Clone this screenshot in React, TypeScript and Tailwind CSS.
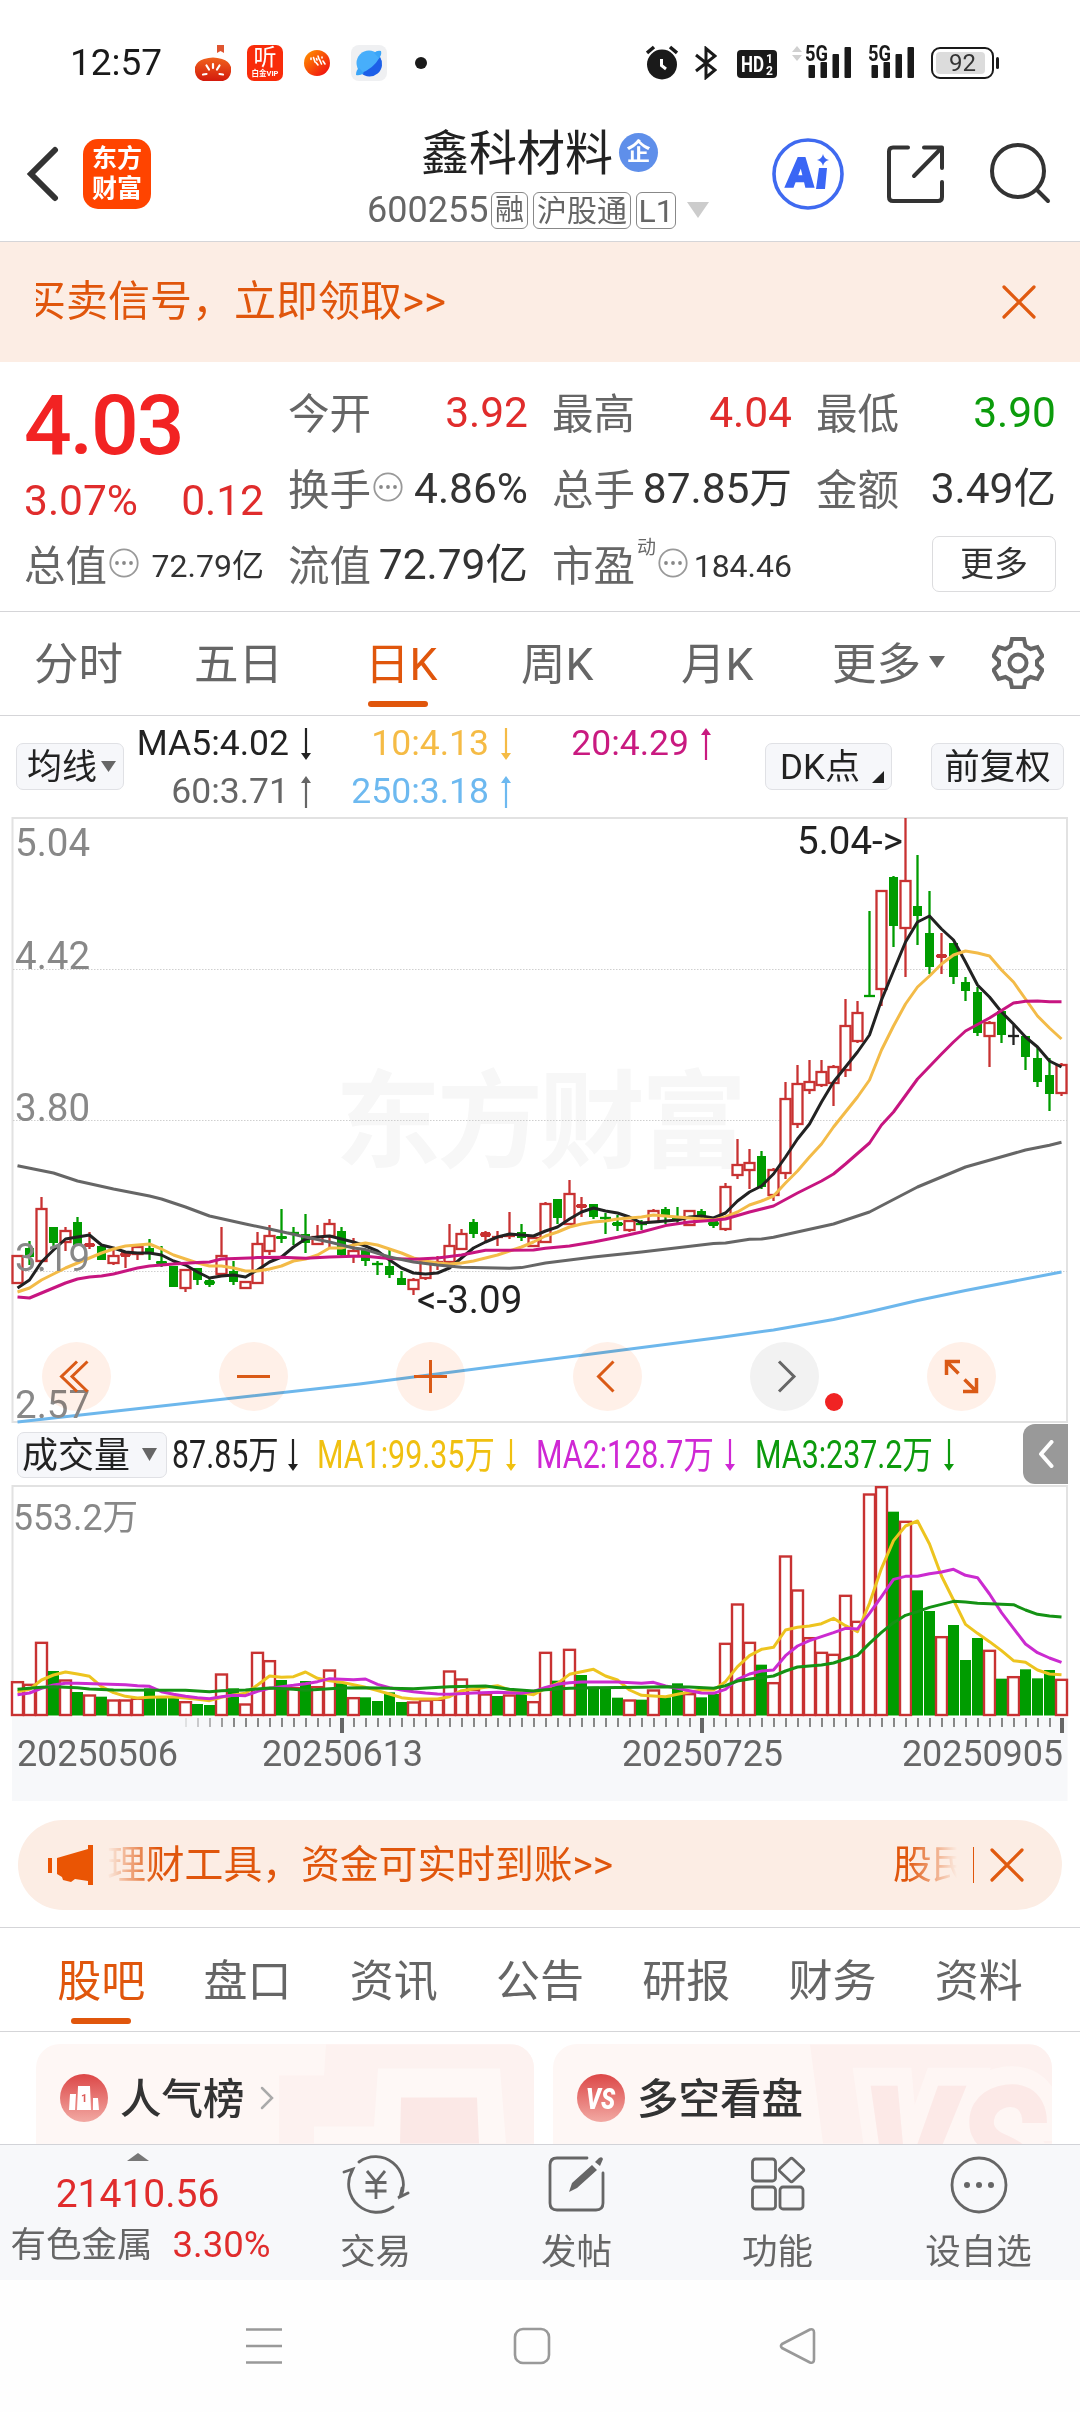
import React from "react";

type Candle = [kind: "r" | "f" | "g" | "k", high: number, top: number, bottom: number, low: number];

// r: hollow rising, f: filled rising, g: falling, k: unchanged
const candles: Candle[] = [
  ["r", 1256, 1256, 1283, 1284], ["g", 1241, 1248, 1257, 1265], ["r", 1197, 1209, 1261, 1262], ["g", 1227, 1227, 1243, 1247],
  ["r", 1227, 1231, 1242, 1251], ["g", 1217, 1222, 1245, 1245], ["f", 1232, 1243, 1247, 1249], ["g", 1246, 1246, 1260, 1260],
  ["r", 1250, 1256, 1263, 1265], ["f", 1252, 1252, 1257, 1268], ["r", 1246, 1247, 1254, 1260], ["g", 1239, 1248, 1254, 1260],
  ["g", 1246, 1261, 1264, 1267], ["g", 1266, 1266, 1287, 1287], ["r", 1270, 1270, 1288, 1292], ["g", 1268, 1268, 1280, 1285],
  ["g", 1277, 1280, 1285, 1287], ["r", 1227, 1256, 1274, 1275], ["g", 1261, 1271, 1282, 1285], ["r", 1281, 1282, 1288, 1288],
  ["r", 1232, 1244, 1283, 1283], ["r", 1225, 1236, 1251, 1255], ["g", 1209, 1236, 1239, 1243], ["g", 1227, 1232, 1234, 1245],
  ["g", 1214, 1234, 1243, 1253], ["r", 1225, 1237, 1244, 1245], ["r", 1219, 1224, 1236, 1247], ["g", 1227, 1231, 1255, 1256],
  ["r", 1238, 1251, 1256, 1263], ["g", 1250, 1250, 1261, 1266], ["g", 1261, 1263, 1265, 1275], ["g", 1250, 1266, 1275, 1278],
  ["g", 1271, 1278, 1285, 1285], ["r", 1278, 1280, 1289, 1295], ["r", 1262, 1262, 1278, 1280], ["f", 1256, 1261, 1263, 1270],
  ["r", 1224, 1246, 1262, 1262], ["r", 1229, 1234, 1249, 1249], ["g", 1219, 1222, 1234, 1238], ["f", 1231, 1232, 1237, 1242],
  ["f", 1231, 1236, 1238, 1246], ["f", 1212, 1235, 1237, 1239], ["g", 1224, 1232, 1238, 1241], ["r", 1238, 1238, 1246, 1246],
  ["r", 1202, 1204, 1242, 1243], ["g", 1199, 1199, 1218, 1224], ["r", 1180, 1194, 1224, 1224], ["f", 1197, 1204, 1208, 1217],
  ["g", 1204, 1204, 1217, 1219], ["g", 1213, 1217, 1219, 1234], ["g", 1215, 1222, 1226, 1231], ["r", 1220, 1221, 1230, 1232],
  ["g", 1220, 1223, 1225, 1230], ["r", 1209, 1211, 1222, 1223], ["g", 1207, 1209, 1215, 1224], ["g", 1207, 1217, 1220, 1223],
  ["r", 1211, 1211, 1225, 1226], ["g", 1209, 1211, 1217, 1218], ["g", 1220, 1221, 1226, 1228], ["r", 1183, 1187, 1229, 1231],
  ["r", 1139, 1165, 1175, 1179], ["r", 1149, 1163, 1170, 1189], ["g", 1151, 1156, 1187, 1189], ["r", 1168, 1170, 1195, 1201],
  ["r", 1082, 1099, 1173, 1179], ["r", 1065, 1084, 1124, 1128], ["r", 1060, 1082, 1090, 1094], ["r", 1060, 1072, 1085, 1087],
  ["r", 1065, 1067, 1083, 1106], ["r", 999, 1026, 1070, 1077], ["r", 1001, 1013, 1041, 1043], ["g", 911, 995, 997, 997],
  ["r", 890, 891, 989, 1006], ["g", 876, 877, 926, 947], ["r", 818, 881, 928, 977], ["g", 855, 906, 916, 945],
  ["g", 891, 933, 967, 974], ["f", 933, 954, 958, 974], ["g", 943, 943, 977, 984], ["g", 977, 982, 991, 1001],
  ["g", 987, 992, 1033, 1036], ["r", 1021, 1023, 1036, 1067], ["g", 1011, 1011, 1035, 1043], ["k", 1025, 1035, 1037, 1045],
  ["g", 1036, 1036, 1057, 1070], ["g", 1048, 1058, 1082, 1087], ["g", 1058, 1075, 1094, 1111], ["r", 1063, 1065, 1093, 1096],
];

const seq = (ys: number[]): [number, number][] => ys.map((y, i) => [i, y]);

const ma5 = seq([
  1288, 1280, 1262, 1250, 1239, 1237, 1235, 1245, 1248, 1252, 1253, 1253, 1255, 1261, 1265, 1272, 1278, 1276, 1275, 1277, 1270, 1262,
  1257, 1247, 1239, 1237, 1236, 1239, 1242, 1246, 1251, 1260, 1268, 1273, 1274, 1273, 1268, 1258, 1248, 1242, 1237, 1234, 1235, 1236,
  1231, 1227, 1219, 1212, 1208, 1211, 1213, 1217, 1223, 1222, 1221, 1220, 1217, 1216, 1218, 1213, 1201, 1192, 1186, 1174, 1157, 1139,
  1124, 1102, 1082, 1067, 1052, 1035, 1000, 971, 942, 922, 916, 929, 940, 962, 985, 997, 1012, 1024, 1037, 1047, 1061, 1067,
]);
const ma10 = seq([
  1292, 1288, 1280, 1274, 1268, 1263, 1258, 1253, 1249, 1246, 1245, 1244, 1249, 1255, 1259, 1263, 1266, 1266, 1268, 1271, 1271, 1269,
  1266, 1261, 1259, 1255, 1248, 1248, 1245, 1243, 1245, 1249, 1253, 1258, 1261, 1263, 1264, 1263, 1261, 1258, 1255, 1251, 1247, 1242,
  1236, 1232, 1227, 1224, 1222, 1221, 1219, 1218, 1217, 1215, 1216, 1217, 1218, 1219, 1220, 1217, 1212, 1205, 1201, 1196, 1183, 1171,
  1157, 1144, 1127, 1112, 1097, 1080, 1050, 1026, 1004, 987, 976, 964, 955, 951, 953, 956, 970, 982, 999, 1016, 1028, 1039,
]);
const ma20: [number, number][] = [
  [0, 1297], [1, 1298], [2, 1293], [3, 1288], [4, 1283], [5, 1279], [6, 1277], [7, 1276], [8, 1274], [9, 1271], [10, 1268], [11, 1266],
  [13, 1264], [15, 1262.5], [16, 1262], [17, 1259], [20, 1257.6], [22, 1257.3], [24, 1258.3], [26, 1257], [28, 1256.3], [29, 1256.3],
  [31, 1258.6], [33, 1259.3], [35, 1258], [37, 1255], [39, 1250.3], [43, 1250], [44, 1248.3], [46, 1246], [48, 1242], [50, 1237.3],
  [52, 1232], [54, 1225.6], [56, 1222], [58, 1220.3], [59, 1219], [61, 1212], [63, 1206], [65, 1193], [67, 1181], [68, 1174], [69, 1164],
  [71, 1143], [72, 1125], [73, 1112], [75, 1079], [77, 1054], [78, 1042], [79, 1031], [81, 1018], [83, 1003], [84, 1001.3], [85, 1001],
  [86, 1001.7], [87, 1001.7],
];
const ma60: [number, number][] = [
  [0, 1165.7], [3, 1173], [5, 1181], [8, 1189], [11, 1196], [12, 1199], [14, 1207], [16, 1216], [19, 1224], [21, 1229], [24, 1237],
  [26, 1242], [28, 1248], [29, 1249.6], [31, 1257], [33, 1262], [35, 1265], [37, 1267.3], [41, 1268.3], [42, 1267.6], [44, 1263],
  [48, 1257], [52, 1252], [58, 1243.6], [59, 1243], [61, 1239.3], [62, 1239], [63, 1237.3], [68, 1224], [71, 1212], [75, 1187],
  [79, 1167], [84, 1150], [86, 1145.3], [87, 1142.3],
];
const ma250: [number, number][] = [
  [0, 1422], [28.5, 1384], [58.5, 1337.5], [63, 1330], [68, 1319.5], [71, 1311.7], [75, 1300.5], [79, 1290.5], [87, 1272],
];

// Heights are kept in thirds of a pixel below y = 1470
const volumes =
  "r635 r643 r517 g603 r630 g666 r675 g680 r690 r690 r685 g655 g683 g683 r695 g702 g705 r612 g655 r702 r547 r572 g630 r653 g633 r650 r600 g640 r683 g682 g693 g667 g696 r696 r690 r688 r603 r627 r658 r672 g678 r675 g672 r695 r547 g632 r538 g615 g650 g657 g683 r690 g689 r660 g682 g640 r671 g682 g672 r520 r402 r517 g584 r638 r258 r360 r503 r547 r553 r376 r454 r72 r50 g125 r154 g361 g423 r500 g465 g570 g504 r541 g626 r620 g598 g625 g600 r628"
    .split(" ")
    .map((v) => ({ up: v[0] === "r", y: 1470 + Number(v.slice(1)) / 3 }));

const third = (pts: [number, number][]): [number, number][] => pts.map(([i, y]) => [i, 1470 + y / 3]);

const vma1 = third(
  seq([
    665, 658, 630, 615, 606, 612, 619, 650, 668, 679, 684, 682, 681, 681, 684, 688, 692, 682, 675, 670, 645, 618, 622, 620, 606, 625, 632,
    637, 644, 652, 662, 672, 683, 687, 687, 687, 680, 662, 657, 652, 647, 660, 668, 674, 655, 640, 613, 605, 598, 618, 630, 660, 676, 678,
    680, 673, 666, 660, 660, 635, 590, 557, 538, 532, 480, 472, 468, 461, 445, 467, 485, 400, 295, 212, 168, 153, 222, 318, 390, 463, 490,
    515, 542, 572, 577, 600, 612, 614,
  ]),
);
const vma2 = third([
  [0, 674], [1, 669], [2, 655], [3, 645], [4, 640], [5, 640], [7, 642], [9, 644], [10, 647], [11, 649], [12, 665], [13, 673], [14, 679],
  [15, 683], [16, 686], [17, 680], [18, 676], [19, 677], [20, 664], [21, 655], [22, 650], [23, 646], [24, 641], [25, 635], [26, 626],
  [28, 629], [29, 627], [30, 643], [31, 653], [32, 660], [33, 665], [34, 669], [35, 672], [36, 673], [38, 669], [40, 667], [42, 670],
  [43, 664], [44, 652], [45, 643], [46, 638], [47, 636], [50, 636], [52, 640], [53, 637], [54, 648], [55, 655], [56, 662], [57, 669],
  [58, 670], [59, 658], [60, 628], [61, 612], [62, 603], [63, 600], [64, 557], [65, 528], [66, 512], [67, 500], [68, 488], [69, 475],
  [70, 477], [71, 430], [72, 380], [73, 328], [74, 319], [75, 319], [76, 311], [77, 306], [78, 298], [79, 316], [80, 323], [81, 372],
  [82, 428], [83, 475], [84, 522], [85, 548], [86, 564], [87, 577],
]);
const vma3 = third([
  [0, 658], [2, 652], [3, 650], [5, 653], [6, 657], [8, 660], [14, 661], [16, 665], [17, 662], [19, 660], [21, 654], [23, 658], [24, 661],
  [26, 656], [27, 654], [29, 653], [33, 656], [36, 650], [39, 648], [41, 658], [43, 663], [44, 659], [46, 655], [48, 653], [52, 652],
  [54, 650], [56, 651], [58, 655], [59, 647], [60, 633], [61, 627], [63, 618], [64, 603], [65, 591], [66, 588], [67, 585], [68, 579],
  [69, 567], [70, 556], [71, 520], [72, 487], [73, 458], [74, 436], [75, 425], [76, 412], [77, 403], [78, 394], [79, 396], [80, 400],
  [83, 404], [84, 420], [85, 433], [86, 438], [87, 441],
]);

const cx = (i: number) => 17.5 + 12 * i;
const line = (pts: [number, number][]) => pts.map(([i, y]) => `${cx(i)},${y}`).join(" ");

const RED = "#c83232";
const GREEN = "#009c00";

function Line({ pts, color }: { pts: [number, number][]; color: string }) {
  return <polyline points={line(pts)} fill="none" stroke={color} strokeWidth={3} strokeLinejoin="round" />;
}

function PriceChart() {
  return (
    <svg className="block h-[607px] w-[1080px]" viewBox="0 817 1080 607">
      <g stroke="#e2e2e2" strokeWidth={2} fill="none">
        <rect x={12.5} y={818} width={1054.5} height={604} />
      </g>
      <text x={335} y={1159} fontSize={106} fontWeight={700} fill="#f7f7f7" textLength={412}>
        东方财富
      </text>
      {[969.5, 1120.5, 1271.5].map((y) => (
        <line key={y} x1={13} x2={1067} y1={y} y2={y} stroke="#cfcfcf" strokeDasharray="1.5 1.5" />
      ))}
      {candles.map(([k, h, t, b, l], i) => {
        const x = cx(i);
        const c = k === "g" ? GREEN : k === "k" ? "#222" : RED;
        return (
          <g key={i} stroke={c} strokeWidth={2.3}>
            {h < t && <line x1={x} x2={x} y1={h} y2={t} />}
            {l > b && <line x1={x} x2={x} y1={b} y2={l} />}
            {k === "r" ? (
              <rect x={x - 5} y={t} width={10} height={Math.max(b - t, 2)} fill="#fff" />
            ) : (
              <rect x={x - 4.5} y={t} width={9} height={Math.max(b - t, 1)} fill={c} stroke="none" />
            )}
            {k !== "r" && b - t <= 5 && <line x1={x - 5.5} x2={x + 5.5} y1={(t + b) / 2} y2={(t + b) / 2} />}
          </g>
        );
      })}
      <Line pts={ma5} color="#222222" />
      <Line pts={ma10} color="#f3bb48" />
      <Line pts={ma20} color="#c71580" />
      <Line pts={ma60} color="#666666" />
      <Line pts={ma250} color="#6db7ec" />
      <g fontSize={38.5} fill="#888">
        <text x={15} y={856}>5.04</text>
        <text x={15} y={969}>4.42</text>
        <text x={15} y={1121}>3.80</text>
        <text x={15} y={1271}>3.19</text>
        <text x={15} y={1418}>2.57</text>
      </g>
      <g fontSize={38.5} fill="#222">
        <text x={797} y={854}>5.04-&gt;</text>
        <text x={417} y={1313}>&lt;-3.09</text>
      </g>
      <g className="mix-blend-multiply">
        {[76.5, 253.5, 430.5, 607.5, 961.5].map((x) => (
          <circle key={x} cx={x} cy={1376.5} r={34.5} fill="#fff0e8" />
        ))}
        <circle cx={784.5} cy={1376.5} r={34.5} fill="#f2f2f2" />
      </g>
      <g fill="none" stroke="#da5a16" strokeWidth={3}>
        <path d="M77 1361.5L61.5 1376.5L77 1391.5M87.5 1361.5L72 1376.5L87.5 1391.5" />
        <path d="M237 1376.5H270" />
        <path d="M414 1376.5H447M430.5 1360V1393" />
        <path d="M613.5 1361.5L598.5 1376.5L613.5 1391.5" />
        <path d="M960 1361.5H946.5V1375M947 1362L958.5 1373.5M976.5 1378V1391.5H963M976 1391L964.5 1379.5" strokeWidth={3.5} />
        <path d="M779 1361.5L794 1376.5L779 1391.5" stroke="#666" />
      </g>
      <circle cx={834} cy={1402} r={9} fill="#f02323" />
    </svg>
  );
}

function VolumeChart() {
  return (
    <svg className="block h-[316px] w-[1080px]" viewBox="0 1485 1080 316">
      <rect x={12} y={1717} width={1055.5} height={84} fill="#f7f8fa" />
      <path d="M12.5 1716V1486H1067V1716" fill="none" stroke="#e2e2e2" strokeWidth={2} />
      {volumes.map(({ up, y }, i) =>
        up ? (
          <rect key={i} x={cx(i) - 5.5} y={y + 0.5} width={11} height={1714.5 - y} fill="#fff" stroke={RED} strokeWidth={2.4} />
        ) : (
          <rect key={i} x={cx(i) - 5.5} y={y} width={11} height={1715.5 - y} fill={GREEN} />
        ),
      )}
      <Line pts={vma1} color="#edc41f" />
      <Line pts={vma2} color="#cb2bd0" />
      <Line pts={vma3} color="#149214" />
      {Array.from({ length: 74 }, (_, k) => k + 14).map((i) => {
        const major = i === 27 || i === 57 || i === 87;
        return (
          <line
            key={i}
            x1={cx(i) + 0.5}
            x2={cx(i) + 0.5}
            y1={1718}
            y2={major ? 1733 : 1727}
            stroke={major ? "#666" : "#888"}
            strokeWidth={major ? 4 : 2}
            opacity={i === 14 ? 0.2 : i === 15 ? 0.4 : i === 16 ? 0.6 : i === 17 ? 0.8 : 1}
          />
        );
      })}
      <text x={13} y={1530} fontSize={36.5} fill="#888" textLength={125} lengthAdjust="spacingAndGlyphs">
        553.2万
      </text>
      <g fontSize={36} fill="#666">
        <text x={17} y={1766} textLength={161}>20250506</text>
        <text x={262} y={1766} textLength={161}>20250613</text>
        <text x={622} y={1766} textLength={161}>20250725</text>
        <text x={902} y={1766} textLength={161}>20250905</text>
      </g>
    </svg>
  );
}

function Arrow({ up = false, className = "" }: { up?: boolean; className?: string }) {
  return (
    <svg viewBox="0 0 12 32" className={"h-8 w-3 shrink-0 " + className} fill="currentColor">
      {up ? <path d="M6 0L11 7H7.1V32H4.9V7H1Z" /> : <path d="M6 32L1 25H4.9V0H7.1V25H11Z" />}
    </svg>
  );
}

function Down({ className = "" }: { className?: string }) {
  return (
    <svg viewBox="0 0 16 12" preserveAspectRatio="none" className={"h-3 w-4 shrink-0 " + className} fill="currentColor">
      <path d="M0 0H16L8 12Z" />
    </svg>
  );
}

function Cross({ className = "" }: { className?: string }) {
  return (
    <svg viewBox="0 0 34 34" className={"h-[34px] w-[34px] shrink-0 " + className} fill="none" stroke="#e05a10" strokeWidth={3.2} strokeLinecap="round">
      <path d="M2 2L32 32M32 2L2 32" />
    </svg>
  );
}

function Info({ className = "" }: { className?: string }) {
  return (
    <svg viewBox="0 0 30 30" className={"h-[30px] w-[30px] shrink-0 " + className}>
      <circle cx={15} cy={15} r={13.7} fill="none" stroke="#999" strokeWidth={1.8} />
      <g fill="#888">
        <circle cx={8} cy={15} r={1.9} />
        <circle cx={15} cy={15} r={1.9} />
        <circle cx={22} cy={15} r={1.9} />
      </g>
    </svg>
  );
}

function Signal({ arrows = false }: { arrows?: boolean }) {
  return (
    <svg viewBox="0 0 62 36" className="h-9 w-[62px] shrink-0 overflow-visible" fill="#1a1a1a">
      {arrows && <path d="M0 7L5 1L10 7ZM0 10H10L5 16Z" fill="#d0d0d0" />}
      <text x={13} y={15.5} fontSize={21.5} fontWeight={700} textLength={23} lengthAdjust="spacingAndGlyphs">
        5G
      </text>
      <rect x={16.5} y={20} width={6.5} height={13} rx={1} />
      <rect x={28.5} y={17} width={6.5} height={16} rx={1} />
      <rect x={40.5} y={9} width={6.5} height={24} rx={1} />
      <rect x={52.5} y={2} width={6.5} height={31} rx={1} />
    </svg>
  );
}

function StatusBar() {
  return (
    <div className="flex h-[124px] items-center pt-px">
      <span className="ml-[70px] w-[125px] text-[37px] leading-none text-[#1a1a1a]">12:57</span>
      <svg viewBox="0 0 36 36" className="h-9 w-9">
        <defs>
          <linearGradient id="fruit" x1="0" y1="0" x2="0" y2="1">
            <stop offset="0" stopColor="#f0621d" />
            <stop offset="1" stopColor="#d31a0c" />
          </linearGradient>
          <linearGradient id="ball" x1="0" y1="0" x2="1" y2="1">
            <stop offset="0.1" stopColor="#ff8a00" />
            <stop offset="0.9" stopColor="#f01010" />
          </linearGradient>
        </defs>
        <path d="M22 0H29V8L25.5 6L22 8Z" fill="#df5530" />
        <path d="M0 22Q2 16 9 14Q18 11 27 14Q34 16 36 22V27Q35 34 28 36H8Q1 34 0 27Z" fill="url(#fruit)" />
        <path d="M18 19V23M11.5 20.5L14 24.5M24.5 20.5L22 24.5M8 29.5L11.5 29M28 29.5L24.5 29" stroke="#fff" strokeWidth={2.2} strokeLinecap="round" />
      </svg>
      <div className="ml-4 flex h-9 w-9 flex-col items-center rounded-[7px] bg-[#f92c0a] text-white">
        <span className="text-[23px] leading-[25px]">听</span>
        <span className="text-[7.5px] font-bold leading-[8px]">白金VIP</span>
      </div>
      <svg viewBox="0 0 26 26" className="ml-[21px] h-[26px] w-[26px]">
        <circle cx={13} cy={13} r={13} fill="url(#ball)" />
        <path d="M7 8V9.5M9.5 7.5L11 12M12 12.5L14 15M14 6L15 9M15.5 9.500L17.500 14M19 11L21 14M12.500 8.500L13 10M18 7V8" stroke="#fff" strokeWidth={1.600} strokeLinecap="round" />
      </svg>
      <svg viewBox="0 0 36 36" className="ml-[21px] h-9 w-9">
        <rect width={36} height={36} rx={8} fill="#eff0f2" />
        <circle cx={18} cy={18} r={12.5} fill="#47aefb" />
        <path d="M29 12A12.5 12.5 0 0 1 10 28Q22 24 29 12Z" fill="#1d5fe8" />
        <path d="M5 30Q5 25 8 23L13 28Q9 31 5 30ZM30 6Q31 10 28 13L23 8Q26 5 30 6Z" fill="#3aa5f8" />
      </svg>
      <span className="ml-7 h-3 w-3 rounded-full bg-[#1a1a1a]" />
      <svg viewBox="0 0 32 36" className="ml-[219px] h-9 w-8">
        <circle cx={16} cy={19.5} r={15} fill="#1a1a1a" />
        <path d="M1 8L8 2M31 8L24 2" stroke="#1a1a1a" strokeWidth={3.5} />
        <path d="M15.5 14V20.5L20 24" stroke="#fff" strokeWidth={3} fill="none" />
      </svg>
      <svg viewBox="0 0 22 34" className="ml-[17px] h-[34px] w-[22px]" fill="none" stroke="#1a1a1a" strokeWidth={3}>
        <path d="M1 9L20 24L11 31.5V2.5L20 10L1 25" />
      </svg>
      <svg viewBox="0 0 40 28" className="ml-5 mt-0.5 h-7 w-10">
        <rect width={40} height={28} rx={4} fill="#1a1a1a" />
        <g fill="#fff" fontWeight={700}>
          <text x={4} y={22} fontSize={22} textLength={23} lengthAdjust="spacingAndGlyphs">HD</text>
          <text x={29} y={13} fontSize={12}>1</text>
          <text x={29} y={25} fontSize={12}>2</text>
        </g>
      </svg>
      <div className="ml-[15px] flex">
        <Signal arrows />
      </div>
      <div className="ml-px flex">
        <Signal />
      </div>
      <div className="ml-[14px] flex h-8 w-[63px] items-center rounded-[9px] border-2 border-[#1a1a1a] p-[3px]">
        <span className="flex h-[22px] w-[49px] items-center justify-center rounded-[4px] bg-[#dcdcdc] pl-1 text-[24px] leading-none text-[#333]">92</span>
      </div>
      <span className="ml-[2px] h-3 w-[3px] rounded bg-[#1a1a1a]" />
    </div>
  );
}

function Tag({ children, className }: { children: React.ReactNode; className: string }) {
  return (
    <span className={"flex h-[37px] items-center justify-center rounded-[6px] border border-[#888] pt-px leading-none text-[#666] " + className}>
      {children}
    </span>
  );
}

function Header() {
  return (
    <header className="flex h-[118px] border-b border-[#d5d5d8]">
      <div className="flex h-[100px] items-center">
        <svg viewBox="0 0 34 56" className="ml-[25px] h-14 w-[34px]" fill="none" stroke="#333" strokeWidth={6} strokeLinecap="round">
          <path d="M30 4L6 28L30 52" />
        </svg>
        <div className="ml-6 flex h-[70px] w-[68px] flex-col items-center justify-center rounded-[15px] bg-[#ff4400] text-[25px] font-bold leading-[30px] text-white">
          <span>东方</span>
          <span>财富</span>
        </div>
      </div>
      <div className="ml-[216px] flex w-[342px] flex-col pt-0.5">
        <div className="flex h-14 items-center pl-[54px]">
          <span className="text-[48px] leading-[56px] text-[#222]">鑫科材料</span>
          <span className="mb-1 ml-1.5 flex h-[39px] w-[39px] items-center justify-center rounded-full bg-[#5f8fea] text-[24px] font-bold leading-none text-white">企</span>
        </div>
        <div className="flex h-14 items-center">
          <span className="w-[124px] text-[36px] leading-none text-[#666]">600255</span>
          <Tag className="w-[37px] text-[29px]">融</Tag>
          <Tag className="ml-[5px] w-[98px] text-[30px]">沪股通</Tag>
          <Tag className="ml-[5px] w-10 text-[32px]">L1</Tag>
          <svg viewBox="0 0 22 16" className="ml-[11px] h-4 w-[22px] shrink-0" fill="#ccc">
            <path d="M0 0H22L11 16Z" />
          </svg>
        </div>
      </div>
      <div className="flex h-[100px] items-center">
        <svg viewBox="0 0 72 72" className="ml-[63px] h-[72px] w-[72px]" fill="#3a66f5">
          <circle cx={36} cy={36} r={34} fill="#fff" stroke="#3f6af0" strokeWidth={3.6} />
          <text x={17} y={49} fontSize={41} fontWeight={900} textLength={28} lengthAdjust="spacingAndGlyphs" stroke="#3a66f5" strokeWidth={1.5} transform="skewX(-4)">
            A
          </text>
          <path d="M47 30H55L53 51H44ZM51 16Q52 21 57 22Q52 23 51 28Q50 23 45 22Q50 21 51 16Z" />
        </svg>
        <svg viewBox="0 0 60 60" className="ml-[42px] h-[60px] w-[60px]" fill="none" stroke="#333" strokeWidth={4} strokeLinecap="round">
          <path d="M22 3.5H7Q3 3.5 3 7.5V53Q3 57 7 57H52Q56 57 56 53V38" />
          <path d="M38 3.5H56V24M55 4.5L28 32" strokeLinejoin="round" />
        </svg>
        <svg viewBox="0 0 62 62" className="ml-[43px] h-[62px] w-[62px]" fill="none" stroke="#333" strokeWidth={4} strokeLinecap="round">
          <circle cx={29} cy={28} r={26} />
          <path d="M48 47L59 58" />
        </svg>
      </div>
    </header>
  );
}

function Field({ label, value, tone = "text-[#333]", info = false, small = false, sup }: {
  label: string;
  value: string;
  tone?: string;
  info?: boolean;
  small?: boolean;
  sup?: string;
}) {
  return (
    <div className="flex h-[75px] items-center whitespace-nowrap">
      <span className="pt-0.5 text-[41.5px] leading-none text-[#666]">{label}</span>
      {sup && <span className="mb-9 ml-0.5 text-[19px] leading-none text-[#666]">{sup}</span>}
      {info && <Info className="mb-1.5 ml-[2px]" />}
      <span className={"ml-auto leading-none " + (small ? "text-[32px] " : "text-[42.5px] ") + tone}>{value}</span>
    </div>
  );
}

function Quote() {
  return (
    <section className="grid h-[250px] grid-cols-4 content-start gap-x-6 border-b border-[#d5d5d8] px-6 pt-[14px]">
      <div className="row-span-2 flex flex-col">
        <span className="h-[98px] text-[84px] font-medium leading-[100px] tracking-[-2px] text-[#f22323]">4.03</span>
        <div className="flex justify-between text-[42.5px] leading-[54px] text-[#e02c2c]">
          <span>3.07%</span>
          <span>0.12</span>
        </div>
      </div>
      <Field label="今开" value="3.92" tone="text-[#e02c2c]" />
      <Field label="最高" value="4.04" tone="text-[#e02c2c]" />
      <Field label="最低" value="3.90" tone="text-[#0c9c0c]" />
      <Field label="换手" value="4.86%" info />
      <Field label="总手" value="87.85万" />
      <Field label="金额" value="3.49亿" />
      <Field label="总值" value="72.79亿" info small />
      <Field label="流值" value="72.79亿" />
      <Field label="市盈" value="184.46" sup="动" info small />
      <div className="flex h-[72px] items-center justify-end">
        <span className="flex h-14 w-[124px] items-center justify-center rounded-[7px] border border-[#dcdcde] text-[34px] leading-none text-[#333]">更多</span>
      </div>
    </section>
  );
}

function PeriodTabs() {
  return (
    <nav className="flex h-[104px] border-b border-[#d5d5d8] text-[44.5px] leading-[106px] text-[#666]">
      <span className="ml-[34px] w-[160px]">分时</span>
      <span className="w-[171px]">五日</span>
      <span className="flex w-[156px] flex-col text-[#e0560c]">
        <span className="h-[89px]">日K</span>
        <span className="ml-[3px] h-1.5 w-[60px] rounded-full bg-[#e0560c]" />
      </span>
      <span className="w-[160px]">周K</span>
      <span className="w-[151px]">月K</span>
      <span className="w-[97px]">更多</span>
      <span className="flex items-center">
        <Down className="mb-1" />
      </span>
      <svg viewBox="0 0 52 52" className="ml-[47px] mt-[25px] h-[52px] w-[52px]" fill="none" stroke="#666" strokeWidth={4}>
        <path d="M20 2H32L33.5 9L38.5 12L45.5 10L50.5 19L45 24V28L50.5 33L45.5 42L38.5 40L33.5 43L32 50.5H20L18.5 43L13.5 40L6.5 42L1.5 33L7 28V24L1.5 19L6.5 10L13.5 12L18.5 9Z" />
        <circle cx={26} cy={26} r={8.5} />
      </svg>
    </nav>
  );
}

function Ma({ text, up = false, className }: { text: string; up?: boolean; className: string }) {
  return (
    <span className={"flex h-12 items-center justify-end leading-none " + className}>
      {text}
      <Arrow up={up} className="ml-[11px] mr-1" />
    </span>
  );
}

function MaLegend() {
  return (
    <div className="flex h-[101px] text-[35.5px]">
      <div className="ml-4 mt-[27px] flex h-[47px] w-[108px] items-center rounded-[7px] border border-[#e0e1e5] bg-[#f6f7fa] pl-2.5 text-[35px] leading-none text-[#222]">
        <span className="pt-0.5">均线</span>
        <Down className="ml-1 h-[11px] w-[15px] text-[#666]" />
      </div>
      <div className="grid w-[592px] grid-cols-[192px_200px_200px] content-start pt-1">
        <Ma text="MA5:4.02" className="text-[#222]" />
        <Ma text="10:4.13" className="text-[#f5bb45]" />
        <Ma text="20:4.29" up className="text-[#c91a80]" />
        <Ma text="60:3.71" up className="text-[#666]" />
        <Ma text="250:3.18" up className="text-[#6db9f0]" />
      </div>
      <div className="ml-[49px] mt-[27px] flex h-[47px] w-[127px] items-center rounded-[7px] border border-[#e0e1e5] bg-[#f6f7fa] pl-3.5 text-[35px] leading-none text-[#222]">
        <span className="pt-0.5">DK点</span>
        <svg viewBox="0 0 12 12" className="ml-3 mt-5 h-3 w-3" fill="#222">
          <path d="M12 0V12H0Z" />
        </svg>
      </div>
      <div className="ml-[39px] mt-[27px] flex h-[47px] w-[133px] items-center justify-center rounded-[7px] border border-[#e0e1e5] bg-[#f6f7fa] pt-0.5 text-[35.5px] leading-none text-[#222]">
        前复权
      </div>
    </div>
  );
}

function VolItem({ text, width, className }: { text: string; width: string; className: string }) {
  return (
    <span className={"flex items-center whitespace-nowrap " + className}>
      <span className={"shrink-0 " + width}>
        <span className="inline-block origin-left scale-x-[0.8] text-[38px] leading-[60px]">{text}</span>
      </span>
      <Arrow />
    </span>
  );
}

function VolumeLegend() {
  return (
    <div className="flex h-[61px] w-[1068px] items-center">
      <div className="ml-[17px] flex h-[46px] w-[150px] shrink-0 items-center rounded-[7px] border border-[#e0e1e5] bg-[#f6f7fa] pl-1 text-[36px] leading-none text-[#222]">
        <span className="pt-0.5">成交量</span>
        <Down className="ml-3 h-[13px] w-[15px] text-[#666]" />
      </div>
      <VolItem text="87.85万" width="w-[115px]" className="ml-[5px] text-[#222]" />
      <VolItem text="MA1:99.35万" width="w-[188px]" className="ml-[18px] text-[#f0c010]" />
      <VolItem text="MA2:128.7万" width="w-[188px]" className="ml-[19px] text-[#cf28d4]" />
      <VolItem text="MA3:237.2万" width="w-[188px]" className="ml-[19px] text-[#0c9a0c]" />
      <span className="ml-auto flex h-[60px] w-[45px] shrink-0 items-center justify-center self-start rounded-l-[12px] bg-[#999]">
        <svg viewBox="0 0 16 28" className="h-7 w-4" fill="none" stroke="#fff" strokeWidth={4} strokeLinecap="round" strokeLinejoin="round">
          <path d="M13.5 2L3 14L13.5 26" />
        </svg>
      </span>
    </div>
  );
}

function Notice() {
  return (
    <div className="mx-[18px] mt-[19px] flex h-[90px] items-center rounded-full bg-[#fcede4] text-[#e0560c]">
      <svg viewBox="0 0 46 40" className="ml-[29px] h-10 w-[46px]" fill="#ea5504">
        <path d="M1 13H5V28H1ZM10 13L41 4V0H46V40H41V36L28 34L24 37L16 35L15 32L10 29Z" />
      </svg>
      <div className="ml-[14px] flex w-[852px] overflow-hidden whitespace-nowrap text-[38.8px] leading-[62px] [mask-image:linear-gradient(to_right,transparent,#000_50px,#000_800px,transparent_850px)]">
        <span className="w-[786px] shrink-0">理财工具，资金可实时到账&gt;&gt;</span>
        <span>股民</span>
      </div>
      <span className="ml-[14px] h-9 w-px bg-[#e0560c]" />
      <Cross className="ml-4" />
    </div>
  );
}

function SectionTabs() {
  return (
    <nav className="mt-[17px] grid h-[105px] grid-cols-7 border-y border-[#d5d5d8] px-7 text-center text-[44px] leading-[109px] text-[#666]">
      <span className="flex flex-col items-center text-[#e0560c]">
        <span className="h-[90px]">股吧</span>
        <span className="h-1.5 w-[60px] rounded-full bg-[#e0560c]" />
      </span>
      {["盘口", "资讯", "公告", "研报", "财务", "资料"].map((t) => (
        <span key={t}>{t}</span>
      ))}
    </nav>
  );
}

function Cards() {
  return (
    <div className="flex h-[113px] items-end overflow-hidden border-b border-[#d2d3d8] pl-9">
      <svg width={0} height={0} className="absolute">
        <defs>
          <linearGradient id="badge" x1="0" y1="0" x2="0" y2="1">
            <stop offset="0" stopColor="#dc4747" />
            <stop offset="1" stopColor="#f2a9a3" />
          </linearGradient>
        </defs>
      </svg>
      <div className="relative flex h-[100px] w-[498px] items-center overflow-hidden rounded-t-[24px] bg-[#fef7f5]">
        <svg viewBox="0 0 498 99" className="absolute inset-0 h-full w-full">
          <path d="M290 0H498V99H243V31H288Z" fill="#fdf2f0" />
          <path d="M342 24H464L470 99H278V82H338Z" fill="#fef8f6" />
          <path d="M365 53H441L443 99H364Z" fill="#fbe8e6" />
        </svg>
        <svg viewBox="0 0 48 48" className="relative ml-6 mt-2 h-12 w-12">
          <circle cx={24} cy={24} r={24} fill="url(#badge)" />
          <path d="M10 20H16L15 36H9ZM18 12H30L31 36H17ZM33 24H38L39 36H33Z" fill="#fff" />
          <text x={21} y={28} fontSize={11} fontWeight={700} fill="#dd5c5a">1</text>
        </svg>
        <span className="relative ml-3 mt-3 text-[41.5px] font-medium leading-none text-[#333]">人气榜</span>
        <svg viewBox="0 0 14 24" className="relative ml-[15px] mt-2 h-6 w-3.5" fill="none" stroke="#aaa" strokeWidth={2.5} strokeLinecap="round">
          <path d="M2 2L12 12L2 22" />
        </svg>
      </div>
      <div className="relative ml-[19px] flex h-[100px] w-[499px] items-center overflow-hidden rounded-t-[24px] bg-[#fef7f5]">
        <svg viewBox="0 0 499 99" className="absolute inset-0 h-full w-full">
          <path d="M257 0H499V99H270Z" fill="#fdf1ef" />
          <text x={308} y={166} fontSize={175} fontWeight={900} fontStyle="italic" fill="#fce9e7" stroke="#fef6f4" strokeWidth={36} paintOrder="stroke" textLength={185} lengthAdjust="spacingAndGlyphs">
            VS
          </text>
        </svg>
        <svg viewBox="0 0 48 48" className="relative ml-6 mt-2 h-12 w-12">
          <circle cx={24} cy={24} r={24} fill="url(#badge)" />
          <text x={9} y={35} fontSize={30} fontWeight={900} fontStyle="italic" fill="#fff" textLength={29} lengthAdjust="spacingAndGlyphs">
            VS
          </text>
        </svg>
        <span className="relative ml-3 mt-3 text-[41.5px] font-medium leading-none text-[#333]">多空看盘</span>
      </div>
    </div>
  );
}

function Action({ label, children }: { label: string; children: React.ReactNode }) {
  return (
    <div className="flex w-[201px] flex-col items-center">
      <svg viewBox="0 0 68 60" className="mt-[9px] h-[60px] w-[68px]" fill="none" stroke="#666" strokeWidth={2.8} strokeLinecap="round">
        {children}
      </svg>
      <span className="mt-4 text-[35.5px] leading-[44px] text-[#666]">{label}</span>
    </div>
  );
}

function BottomBar() {
  return (
    <div className="flex h-[135px] bg-[#f7f8fa]">
      <div className="flex w-[275px] flex-col items-center">
        <svg viewBox="0 0 22 8" className="mt-2 h-2 w-[22px]" fill="#777">
          <path d="M0 8L11 0L22 8Z" />
        </svg>
        <span className="mt-[10px] text-[39px] leading-[46px] text-[#e02c2c]">21410.56</span>
        <div className="mt-1 flex items-center pl-1.5 text-[36.5px] leading-[48px] text-[#e02c2c]">
          <span className="text-[35.5px] text-[#666]">有色金属</span>
          <span className="ml-5">3.30%</span>
        </div>
      </div>
      <Action label="交易">
        <path d="M17 8A28 28 0 0 1 59 42M59 42L57 43M51 53A28 28 0 0 1 10 17M2 18L11 15L8 22M66 39L58 43L60 34" />
        <path d="M25 17L34 28L43 17M34 28V45M23.5 28.5H44.5M23.5 37H44.5" strokeLinecap="butt" />
      </Action>
      <Action label="发帖">
        <path d="M44 4H14Q7 4 7 11V49Q7 56 14 56H53Q60 56 60 49V19" />
        <path d="M26 38L29 29L49 11L54 16L34 34ZM52 8L56 4Q59 2 60 5L57 12Z" fill="#666" stroke="none" />
      </Action>
      <Action label="功能">
        <rect x={8.5} y={5} width={23} height={22} rx={3} />
        <rect x={8.5} y={33} width={23} height={22} rx={3} />
        <rect x={36} y={33} width={23} height={22} rx={3} />
        <path d="M46 5Q47.5 3.5 49 5L59 14.5Q60.5 16 59 17.5L49 27Q47.5 28.5 46 27L36 17.5Q34.5 16 36 14.5Z" />
      </Action>
      <Action label="设自选">
        <circle cx={34} cy={31} r={27} />
        <g fill="#666" stroke="none">
          <circle cx={22} cy={31} r={3} />
          <circle cx={34} cy={31} r={3} />
          <circle cx={46} cy={31} r={3} />
        </g>
      </Action>
    </div>
  );
}

function SystemNav() {
  return (
    <div className="flex h-[132px] items-center bg-[#fefefe]">
      <svg viewBox="0 0 38 38" className="ml-[245px] h-[38px] w-[38px]" stroke="#999" strokeWidth={2.6} fill="none">
        <path d="M1 2.5H37M1 19H37M1 35.5H37" />
      </svg>
      <svg viewBox="0 0 38 38" className="ml-[230px] h-[38px] w-[38px]" stroke="#999" strokeWidth={2.6} fill="none">
        <rect x={2} y={2} width={34} height={34} rx={8} />
      </svg>
      <svg viewBox="0 0 38 38" className="ml-[228px] h-[38px] w-[38px]" stroke="#999" strokeWidth={2.6} fill="none" strokeLinejoin="round">
        <path d="M3 17L31 2.5Q35 1.5 35 5.5V32.5Q35 36.5 31 35.5L3 21Q1 19 3 17Z" />
      </svg>
    </div>
  );
}

export default function App() {
  return (
    <div className="h-[2412px] w-[1080px] overflow-hidden bg-white font-['Roboto','Noto_Sans_CJK_SC',sans-serif]">
      <StatusBar />
      <Header />
      <div className="flex h-[120px] items-center bg-[#fcede4]">
        <div className="ml-9 w-[966px] overflow-hidden whitespace-nowrap text-[42px] leading-[64px] text-[#e0560c]">
          <span className="-ml-3">买卖信号，立即领取&gt;&gt;</span>
        </div>
        <Cross />
      </div>
      <Quote />
      <PeriodTabs />
      <MaLegend />
      <PriceChart />
      <VolumeLegend />
      <VolumeChart />
      <Notice />
      <SectionTabs />
      <Cards />
      <BottomBar />
      <SystemNav />
    </div>
  );
}
